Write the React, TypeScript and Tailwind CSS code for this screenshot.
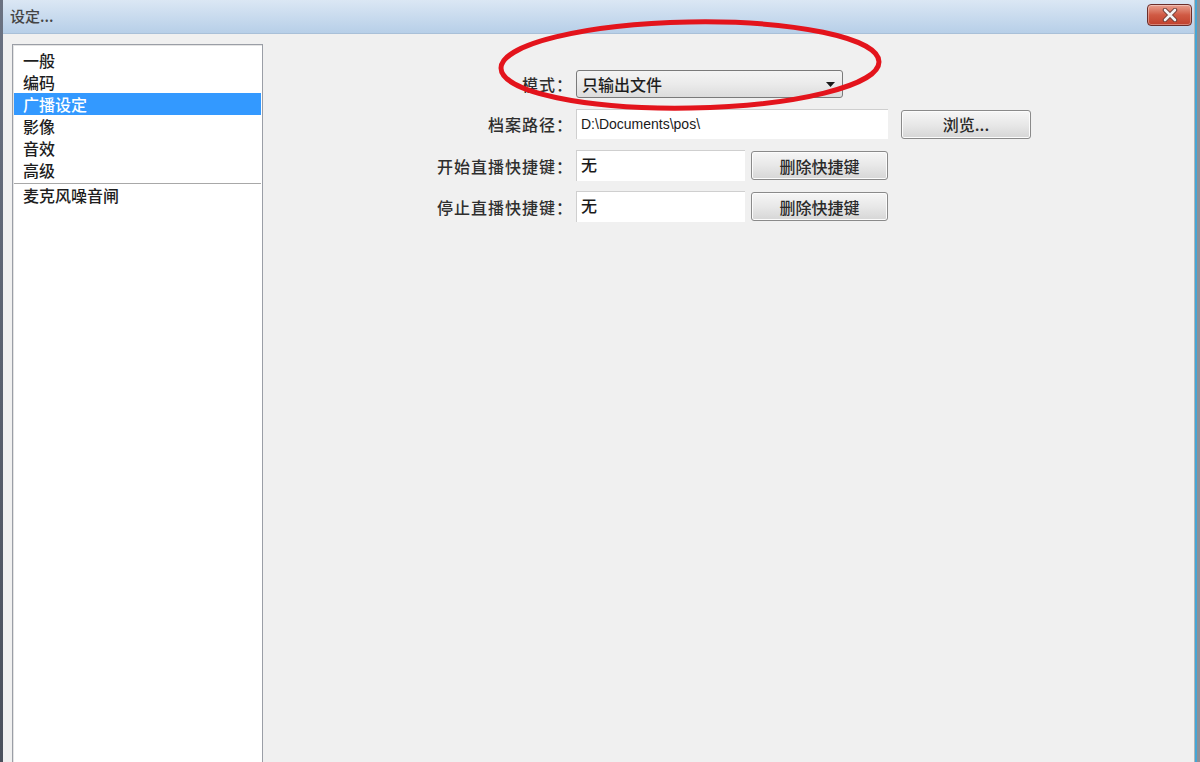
import React from "react";

const font = { fontFamily: '"Noto Sans CJK SC", "Noto Sans", sans-serif' };

const navItems = ["一般", "编码", "广播设定", "影像", "音效", "高级"];

function WinButton({ children, className = "" }: { children: React.ReactNode; className?: string }) {
  return (
    <div
      className={`flex items-center justify-center rounded-[3px] border border-[#8a8a8a] bg-gradient-to-b from-[#f6f6f6] via-[#e8e8e8] to-[#d6d6d6] text-[16px] font-medium text-[#2a2a2a] shadow-[inset_0_0_0_1px_#fcfcfc] ${className}`}
    >
      {children}
    </div>
  );
}

function Field({ children, className = "" }: { children: React.ReactNode; className?: string }) {
  return (
    <div
      className={`border-l border-t border-[#cfcfcf] bg-white px-[4px] text-[#1a1a1a] ${className}`}
    >
      {children}
    </div>
  );
}

function Row({ label, children }: { label: string; children: React.ReactNode }) {
  return (
    <div className="flex items-center">
      <div className="w-[173px] shrink-0 text-right text-[16px] font-medium tracking-[1px] text-[#2e2e2e]">{label}</div>
      <div className="ml-[3px] flex items-center">{children}</div>
    </div>
  );
}

export default function App() {
  return (
    <div className="relative flex h-[762px] w-[1200px] overflow-hidden bg-[#f0f0f0]" style={font}>
      {/* left window frame */}
      <div className="w-[3px] shrink-0 bg-gradient-to-b from-[#6a7282] to-[#4a505c]" />

      <div className="flex min-w-0 flex-1 flex-col">
        {/* title bar */}
        <div className="flex h-[34px] shrink-0 items-center justify-between border-b border-[#a9c0d8] bg-gradient-to-b from-[#dbe7f4] to-[#b7cfe8] pl-[7px] pr-[2px]">
          <span className="text-[15px] font-medium text-[#444]">设定...</span>
          <div className="mb-[4px] flex h-[22px] w-[45px] items-center justify-center rounded-[4px] border border-[#6b2e2a] bg-gradient-to-b from-[#e8a090] via-[#d05a44] to-[#c0402c] shadow-[inset_0_0_0_1px_rgba(255,255,255,0.35)]">
            <svg width="16" height="14" viewBox="0 0 16 14">
              <path
                d="M3 2 L13 12 M13 2 L3 12"
                stroke="#6a3a34"
                strokeWidth="4.5"
                strokeLinecap="round"
              />
              <path
                d="M3 2 L13 12 M13 2 L3 12"
                stroke="#f4f4f4"
                strokeWidth="2.6"
                strokeLinecap="round"
              />
            </svg>
          </div>
        </div>

        {/* body */}
        <div className="flex min-h-0 flex-1 pt-[10px]">
          {/* category list */}
          <div className="ml-[9px] h-[740px] w-[251px] shrink-0 border border-[#9a9ea6] bg-white pt-[4px] shadow-[inset_1px_1px_0_#e4e4e4]">
            {navItems.map((item) => (
              <div
                key={item}
                className={`mx-px flex h-[22px] items-center pl-[9px] text-[16px] font-medium ${
                  item === "广播设定" ? "bg-[#3399ff] text-white" : "text-[#1e1e1e]"
                }`}
              >
                {item}
              </div>
            ))}
            <div className="mx-px mt-[2px] h-px bg-[#a8a8a8]" />
            <div className="mx-px flex h-[22px] items-center pl-[9px] text-[16px] font-medium text-[#1e1e1e]">
              麦克风噪音闸
            </div>
          </div>

          {/* settings form */}
          <div className="ml-[137px] flex flex-col pt-[26px]">
            <Row label="模式：">
              <div className="flex h-[28px] w-[267px] items-center justify-between rounded-[3px] border border-[#7a7a7a] bg-gradient-to-b from-[#f4f4f4] via-[#ebebeb] to-[#dcdcdc] pl-[5px] pr-[7px] text-[16px] font-medium text-[#1e1e1e]">
                <span>只输出文件</span>
                <svg width="9" height="5" viewBox="0 0 9 5">
                  <path d="M0 0 H9 L4.5 5 Z" fill="#1a1a1a" />
                </svg>
              </div>
            </Row>

            <div className="mt-[11px]">
              <Row label="档案路径：">
                <Field className="h-[30px] w-[312px] pt-[5px] text-[14px] leading-[17px]">
                  <span style={{ fontFamily: '"Liberation Sans", sans-serif' }}>D:\Documents\pos\</span>
                </Field>
                <WinButton className="ml-[13px] h-[29px] w-[130px]">浏览...</WinButton>
              </Row>
            </div>

            <div className="mt-[11px]">
              <Row label="开始直播快捷键：">
                <Field className="h-[31px] w-[169px] pt-[2px] text-[16px] font-medium leading-[22px]">无</Field>
                <WinButton className="ml-[6px] h-[29px] w-[137px]">删除快捷键</WinButton>
              </Row>
            </div>

            <div className="mt-[10px]">
              <Row label="停止直播快捷键：">
                <Field className="h-[31px] w-[169px] pt-[2px] text-[16px] font-medium leading-[22px]">无</Field>
                <WinButton className="ml-[6px] h-[29px] w-[137px]">删除快捷键</WinButton>
              </Row>
            </div>
          </div>
        </div>
      </div>

      {/* right window frame */}
      <div className="flex w-[6px] shrink-0">
        <div className="w-px bg-[#b4b4b4]" />
        <div className="w-[2px] bg-[#45a6d6]" />
        <div className="flex-1 bg-[#8c9098]" />
      </div>

      {/* hand-drawn red annotation */}
      <svg
        className="pointer-events-none absolute left-0 top-0"
        width="1200"
        height="762"
        viewBox="0 0 1200 762"
      >
        <ellipse
          cx="690"
          cy="65"
          rx="189"
          ry="43"
          fill="none"
          stroke="#e3141c"
          strokeWidth="5"
          transform="rotate(-1 690 65)"
        />
      </svg>
    </div>
  );
}
